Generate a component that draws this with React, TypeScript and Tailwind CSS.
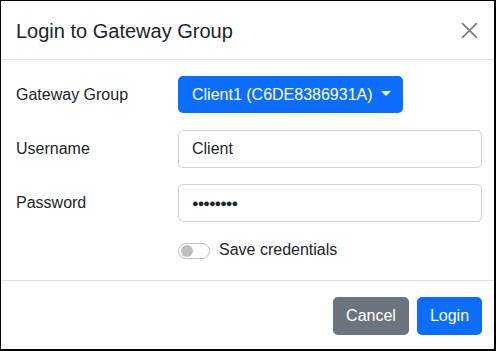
export default function App() {
  return (
    <div
      className="w-[496px] h-[351px] bg-white border-l border-t border-r-2 border-b-2 border-black flex flex-col text-[#212529]"
      style={{ fontFamily: '"Liberation Sans", Arial, sans-serif' }}
    >
      <div className="h-[59px] flex items-center justify-between pl-[15px] pr-[15px] border-b border-[#dee2e6] shrink-0">
        <div className="text-[20px] leading-[24px] mt-[1px]">Login to Gateway Group</div>
        <svg width="17" height="17" viewBox="0 0 16 16" className="mt-[1px] mr-[1px]">
          <path d="M1 1 L15 15 M15 1 L1 15" stroke="#7a7a7a" strokeWidth="1.6" fill="none" />
        </svg>
      </div>
      <div className="flex flex-col pl-[15px] pr-[12px] pt-[16px] h-[221px] border-b border-[#dee2e6] shrink-0">
        <div className="flex items-center h-[37px]">
          <div className="w-[162px] text-[16px]">Gateway Group</div>
          <button className="h-[37px] w-[225px] bg-[#0d6efd] text-white rounded-[5px] flex items-center pl-[14px] text-[16px]">
            <span>Client1 (C6DE8386931A)</span>
            <span className="ml-[8px] w-0 h-0 border-l-[5px] border-r-[5px] border-t-[5px] border-l-transparent border-r-transparent border-t-white mt-[-2px]" />
          </button>
        </div>
        <div className="flex items-center h-[38px] mt-[17px]">
          <div className="w-[162px] text-[16px]">Username</div>
          <div className="flex-1 h-[38px] border border-[#ced4da] rounded-[5px] flex items-center pl-[13px] text-[16px]">
            Client
          </div>
        </div>
        <div className="flex items-center h-[38px] mt-[16px]">
          <div className="w-[162px] text-[16px]">Password</div>
          <div className="flex-1 h-[38px] border border-[#ced4da] rounded-[5px] flex items-center pl-[13px] text-[16px]">
            <span className="text-[11px] tracking-[-1px] leading-none">●●●●●●●●</span>
          </div>
        </div>
        <div className="flex items-center h-[24px] mt-[16px] pl-[162px]">
          <div className="w-[32px] h-[16px] rounded-full border border-[#bfbfbf] flex items-center pl-[2px] mt-[2px]">
            <div className="w-[12px] h-[12px] rounded-full bg-[#bfbfbf]" />
          </div>
          <span className="ml-[9px] text-[16px]">Save credentials</span>
        </div>
      </div>
      <div className="flex-1 flex justify-end items-start pt-[16px] pr-[12px] gap-[8px]">
        <button className="h-[38px] w-[76px] bg-[#6c757d] text-white rounded-[5px] text-[16px]">Cancel</button>
        <button className="h-[38px] w-[65px] bg-[#0d6efd] text-white rounded-[5px] text-[16px]">Login</button>
      </div>
    </div>
  );
}
